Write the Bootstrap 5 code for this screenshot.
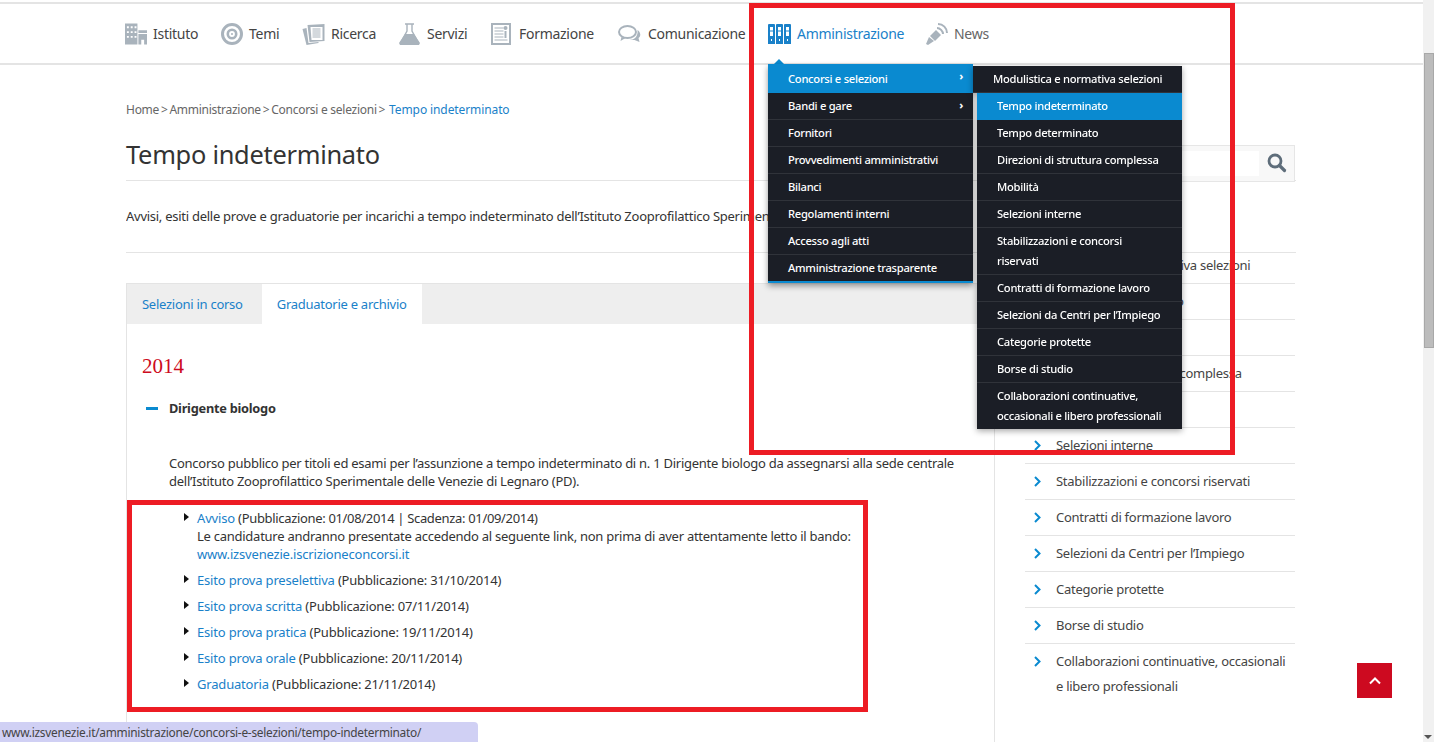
<!DOCTYPE html>
<html lang="it"><head><meta charset="utf-8"><title>Tempo indeterminato</title>
<link href="https://cdn.jsdelivr.net/npm/bootstrap@5.3.0/dist/css/bootstrap.min.css" rel="stylesheet">
<style>
html,body{height:742px;overflow:hidden}
body{font-family:"Noto Sans","Liberation Sans",sans-serif;font-size:13px;color:#333;background:#fff;position:relative;letter-spacing:-.265px}
a{text-decoration:none;color:#1a81c9}
.pg{width:1423px;height:742px;overflow:hidden;position:relative}
.topbar{border-top:2px solid #e4e4e4;margin-top:2px;border-bottom:2px solid #e4e4e4;padding-left:125px;height:63px}
.mi{color:#444;font-size:14px;gap:6px;flex:none;white-space:nowrap;letter-spacing:-.28px}
.mi.on{color:#1a81c9}
.mi.dim{color:#666}
.mi svg{flex:none}
.mi:nth-child(1){width:96px}
.mi:nth-child(2){width:81px}
.mi:nth-child(3){width:97px}
.mi:nth-child(4){width:92px;gap:7px}
.mi:nth-child(5){width:126px;gap:8px}
.mi:nth-child(6){width:151px}
.mi:nth-child(7){width:158px}
.wrap{width:1170px;margin-left:126px}
.crumb{margin-top:36px;height:20px;font-size:12px;color:#666;line-height:18px}
.crumb a{letter-spacing:-.1px;margin-left:2px}
.sep{margin:0 -1px}
h1.tt{font-size:25.4px;font-weight:400;margin:15px 0 0;padding-bottom:8px;border-bottom:1px solid #e4e4e4;color:#333;line-height:36px}
.intro{margin:26px 0 0;height:46px;border-bottom:1px solid #e4e4e4;line-height:18px;white-space:nowrap;overflow:hidden;width:100%}
.cols{margin-top:30px}
.leftc{width:869px;border:1px solid #e4e4e4;border-bottom:0;height:460px}
.tabsb{background:#eee;height:40px;padding:0}
.tabsb a{display:block;padding:0 15px;line-height:40px;font-size:13px}
.tabsb a.act{background:#fff}
.yr{color:#cd0a20;font-family:"Liberation Serif",serif;font-size:21px;margin:30px 0 0 15px;line-height:24px;letter-spacing:0}
.acc{margin:20px 0 0 19px;font-weight:700;line-height:20px;font-size:12.8px}
.dash{width:12px;height:3px;background:#0a8ad0;margin-right:11px}
.desc{margin:36px 20px 0 42px;line-height:18px}
.docs{list-style:none;margin:19px 0 0;padding:0 0 0 70px}
.docs li{position:relative;line-height:18px;margin-bottom:8px;letter-spacing:-.2px}
.docs li a{letter-spacing:-.18px}
.docs .cand{letter-spacing:-.26px}
.docs .avv{letter-spacing:-.33px}
.docs li::before{content:"";position:absolute;left:-13px;top:4px;border-left:5px solid #111;border-top:4px solid transparent;border-bottom:4px solid transparent}
.search{position:absolute;left:1000px;top:145px;width:295px;height:37px;background:#f8f8f8;border:1px solid #e6e6e6}
.sfield{position:absolute;left:0;top:5px;width:258px;height:25px;background:#fff}
.sglass{position:absolute;right:7px;top:7px}
.side{position:absolute;left:1025px;top:248px;width:270px;list-style:none;margin:0;padding:0}
.side li{border-bottom:1px solid #e4e4e4;padding:8px 0 8px 31px;line-height:19px;position:relative;color:#444;font-size:13px}
.side li svg{position:absolute;left:9px;top:12px}
.side li:last-child{border-bottom:0;line-height:25px;padding-top:5px}
.menu1,.menu2{position:absolute;list-style:none;margin:0;padding:0;font-size:11.2px;color:#fff;font-weight:500;letter-spacing:-.28px}
.menu1{left:768px;top:64px;width:205px;background:#1b1e26;border-bottom:2px solid #0a8ad0;box-shadow:0 3px 6px rgba(0,0,0,.4)}
.menu2{left:973px;top:66px;width:209px;filter:drop-shadow(0 2px 3px rgba(0,0,0,.35))}
.menu1 li,.menu2 li{border-bottom:1px solid #30333a;padding:3px 10px 3px 20px;line-height:20px;position:relative;background:#1b1e26}
.menu1 li:first-child{padding-top:5px}
.menu1 li:last-child,.menu2 li:last-child{border-bottom:0}
.menu2 li{margin-left:4px;padding-right:18px}
.menu2 li.head{margin-left:0;padding-right:10px}
.menu1 li.on1,.menu2 li.on1{background:#0a8ad0;border-bottom-color:#0a8ad0}
.arr{position:absolute;right:10px;top:2px;font-weight:700}
.caret{position:absolute;left:774px;top:59px;border-left:5px solid transparent;border-right:5px solid transparent;border-bottom:5px solid #0a8ad0}
.rb{position:absolute;border:5px solid #ed1c24}
.rb1{left:749px;top:3px;width:486px;height:452px}
.rb2{left:127px;top:500px;width:741px;height:212px}
.totop{position:absolute;left:1357px;top:663px;width:35px;height:35px;background:#cd0a20}
.sbar{position:absolute;right:0;top:0;width:11px;height:742px;background:#f1f1f1}
.sthumb{position:absolute;left:1px;top:53px;width:10px;height:295px;background:#bcbcbc;border:1px solid #a8a8a8}
.sb-d{position:absolute;right:2px;bottom:3px;border-left:4px solid transparent;border-right:4px solid transparent;border-top:4px solid #555}
.status{position:absolute;left:0;bottom:0;width:478px;height:20px;background:#d0d0f4;border-top-right-radius:4px;font-size:11.9px;color:#444;padding-left:2px;line-height:21px;white-space:nowrap}
</style></head><body>
<div class="pg">
<nav class="topbar d-flex align-items-center">
<a class="mi d-flex align-items-center" href="#"><svg width="22" height="22" viewBox="0 0 23 22"><path fill="#a9b3bc" d="M0 0h13v22H0zM14 7h9v3h-9zM14 11h9v11h-3v-5h-3v5h-3z"/><path fill="#fff" d="M2 3h2v2H2zM6 3h2v2H6zM10 3h2v2h-2zM2 8h2v2H2zM6 8h2v2H6zM10 8h2v2h-2zM2 13h2v2H2zM6 13h2v2H6zM10 13h2v2h-2z"/></svg>Istituto</a>
<a class="mi d-flex align-items-center" href="#"><svg width="22" height="22" viewBox="0 0 22 22"><circle cx="11" cy="11" r="9.500" fill="none" stroke="#a9b3bc" stroke-width="3"/><circle cx="11" cy="11" r="4.200" fill="none" stroke="#a9b3bc" stroke-width="2.600"/><circle cx="11" cy="11" r="1" fill="#a9b3bc"/></svg>Temi</a>
<a class="mi d-flex align-items-center" href="#"><svg width="23" height="22" viewBox="0 0 22 22"><path fill="#a9b3bc" d="M0 6l4-1 2 15 10-1v1l-12 2z"/><path fill="#a9b3bc" d="M5 2l17-1v17l-15 1z"/><path fill="#fff" d="M8 4h12v13H9z"/><path stroke="#a9b3bc" d="M10 6h8M10 8h8M10 10h8M10 12h8M10 14h8"/></svg>Ricerca</a>
<a class="mi d-flex align-items-center" href="#"><svg width="21" height="22" viewBox="0 0 21 22"><path fill="none" stroke="#a9b3bc" stroke-width="1.400" d="M6 1h9M8 1v7L2 19M13 1v7l6 11"/><path fill="#a9b3bc" d="M6 11h9l6 9-1 2H1l-1-2z"/></svg>Servizi</a>
<a class="mi d-flex align-items-center" href="#"><svg width="20" height="22" viewBox="0 0 20 22"><rect x="1" y="1" width="18" height="20" fill="#fff" stroke="#a9b3bc" stroke-width="2"/><path stroke="#a9b3bc" d="M3.500 5h9M3.500 8h9M3.500 11h9M3.500 14h9M3.500 17h13"/><circle cx="14.500" cy="5" r="2" fill="#a9b3bc"/><path fill="#a9b3bc" d="M13.500 8h2v7h-2z"/></svg>Formazione</a>
<a class="mi d-flex align-items-center" href="#"><svg width="25" height="20" viewBox="0 0 24 20"><ellipse cx="10" cy="8" rx="8.500" ry="6" fill="#fff" stroke="#a9b3bc" stroke-width="2"/><path fill="#a9b3bc" d="M4 13l-1 4 5-3zM20 6c3 2 4 6 1 8l1 4-5-2-5 0c4 0 9-3 8-10z"/></svg>Comunicazione</a>
<a class="mi on d-flex align-items-center" href="#"><svg width="23" height="20" viewBox="0 0 23 20"><path fill="#1a81c9" d="M1 0h5a1 1 0 0 1 1 1v19H0V1a1 1 0 0 1 1-1zM9 0h5a1 1 0 0 1 1 1v19H8V1a1 1 0 0 1 1-1zM17 0h5a1 1 0 0 1 1 1v19h-7V1a1 1 0 0 1 1-1z"/><path fill="#fff" d="M2 3h3v9H2zM10 3h3v9h-3zM18 3h3v9h-3zM3 15h1v2H3zM11 15h1v2h-1zM19 15h1v2h-1z"/><path stroke="#1a81c9" d="M2 7h3M10 7h3M18 7h3"/></svg>Amministrazione</a>
<a class="mi dim d-flex align-items-center" href="#"><svg width="22" height="22" viewBox="0 0 22 22"><path fill="#a9b3bc" d="M3 14l5 4-6 4-2-1z"/><path fill="#a9b3bc" d="M4 13l6-6 5 5-6 6z"/><path fill="none" stroke="#a9b3bc" stroke-width="2" d="M11 5c3 0 6 3 6 6M12 1c5 0 9 4 9 9"/></svg>News</a>
</nav>
<div class="wrap">
<div class="crumb">Home <span class="sep">&gt;</span> Amministrazione <span class="sep">&gt;</span> Concorsi e selezioni <span class="sep">&gt;</span> <a href="#">Tempo indeterminato</a></div>
<h1 class="tt">Tempo indeterminato</h1>
<p class="intro">Avvisi, esiti delle prove e graduatorie per incarichi a tempo indeterminato dell’Istituto Zooprofilattico Sperimentale delle Venezie</p>
<div class="cols d-flex">
<div class="leftc">
<div class="tabsb d-flex"><a class="me-1" href="#">Selezioni in corso</a><a class="act" href="#">Graduatorie e archivio</a></div>
<div class="yr">2014</div>
<div class="acc d-flex align-items-center"><span class="dash"></span>Dirigente biologo</div>
<p class="desc">Concorso pubblico per titoli ed esami per l’assunzione a tempo indeterminato di n. 1 Dirigente biologo da assegnarsi alla sede centrale dell’Istituto Zooprofilattico Sperimentale delle Venezie di Legnaro (PD).</p>
<ul class="docs">
<li><a href="#">Avviso</a> <span class="avv">(Pubblicazione: 01/08/2014 | Scadenza: 01/09/2014)</span><br><span class="cand">Le candidature andranno presentate accedendo al seguente link, non prima di aver attentamente letto il bando:</span><br><a href="#">www.izsvenezie.iscrizioneconcorsi.it</a></li>
<li><a href="#">Esito prova preselettiva</a> (Pubblicazione: 31/10/2014)</li>
<li><a href="#">Esito prova scritta</a> (Pubblicazione: 07/11/2014)</li>
<li><a href="#">Esito prova pratica</a> (Pubblicazione: 19/11/2014)</li>
<li><a href="#">Esito prova orale</a> (Pubblicazione: 20/11/2014)</li>
<li><a href="#">Graduatoria</a> (Pubblicazione: 21/11/2014)</li>
</ul>
</div>
</div>
</div>
<div class="search"><div class="sfield"></div><svg class="sglass" width="20" height="20" viewBox="0 0 20 20"><circle cx="8" cy="8" r="6" fill="none" stroke="#5e6d7a" stroke-width="2.800"/><path d="M12.500 12.500l5 5" stroke="#5e6d7a" stroke-width="3.200" stroke-linecap="round"/></svg></div>
<ul class="side">
<li>Modulistica e normativa selezioni</li><li>Tempo indeterminato</li><li>Tempo determinato</li><li>Direzioni di struttura complessa</li><li>Mobilità</li>
<li><svg width="7" height="11" viewBox="0 0 7 11"><path d="M1 1l4.500 4.500L1 10" fill="none" stroke="#0a8ad0" stroke-width="2"/></svg>Selezioni interne</li>
<li><svg width="7" height="11" viewBox="0 0 7 11"><path d="M1 1l4.500 4.500L1 10" fill="none" stroke="#0a8ad0" stroke-width="2"/></svg>Stabilizzazioni e concorsi riservati</li>
<li><svg width="7" height="11" viewBox="0 0 7 11"><path d="M1 1l4.500 4.500L1 10" fill="none" stroke="#0a8ad0" stroke-width="2"/></svg>Contratti di formazione lavoro</li>
<li><svg width="7" height="11" viewBox="0 0 7 11"><path d="M1 1l4.500 4.500L1 10" fill="none" stroke="#0a8ad0" stroke-width="2"/></svg>Selezioni da Centri per l’Impiego</li>
<li><svg width="7" height="11" viewBox="0 0 7 11"><path d="M1 1l4.500 4.500L1 10" fill="none" stroke="#0a8ad0" stroke-width="2"/></svg>Categorie protette</li>
<li><svg width="7" height="11" viewBox="0 0 7 11"><path d="M1 1l4.500 4.500L1 10" fill="none" stroke="#0a8ad0" stroke-width="2"/></svg>Borse di studio</li>
<li><svg width="7" height="11" viewBox="0 0 7 11"><path d="M1 1l4.500 4.500L1 10" fill="none" stroke="#0a8ad0" stroke-width="2"/></svg>Collaborazioni continuative, occasionali e libero professionali</li>
</ul>
<span class="caret"></span>
<ul class="menu1"><li class="on1">Concorsi e selezioni<span class="arr">›</span></li><li>Bandi e gare<span class="arr">›</span></li><li>Fornitori</li><li>Provvedimenti amministrativi</li><li>Bilanci</li><li>Regolamenti interni</li><li>Accesso agli atti</li><li>Amministrazione trasparente</li></ul>
<ul class="menu2"><li class="head">Modulistica e normativa selezioni</li><li class="on1">Tempo indeterminato</li><li>Tempo determinato</li><li>Direzioni di struttura complessa</li><li>Mobilità</li><li>Selezioni interne</li><li>Stabilizzazioni e concorsi riservati</li><li>Contratti di formazione lavoro</li><li>Selezioni da Centri per l’Impiego</li><li>Categorie protette</li><li>Borse di studio</li><li>Collaborazioni continuative, occasionali e libero professionali</li></ul>
<div class="rb rb1"></div><div class="rb rb2"></div>
<a class="totop d-flex align-items-center justify-content-center" href="#" aria-label="Torna su"><svg width="12" height="8" viewBox="0 0 12 8"><path d="M1 6.500l5-5 5 5" fill="none" stroke="#fff" stroke-width="2"/></svg></a>
</div>
<div class="sbar"><div class="sthumb"></div><div class="sb-d"></div></div>
<div class="status">www.izsvenezie.it/amministrazione/concorsi-e-selezioni/tempo-indeterminato/</div>
<script src="https://cdn.jsdelivr.net/npm/bootstrap@5.3.0/dist/js/bootstrap.bundle.min.js"></script>
</body></html>
